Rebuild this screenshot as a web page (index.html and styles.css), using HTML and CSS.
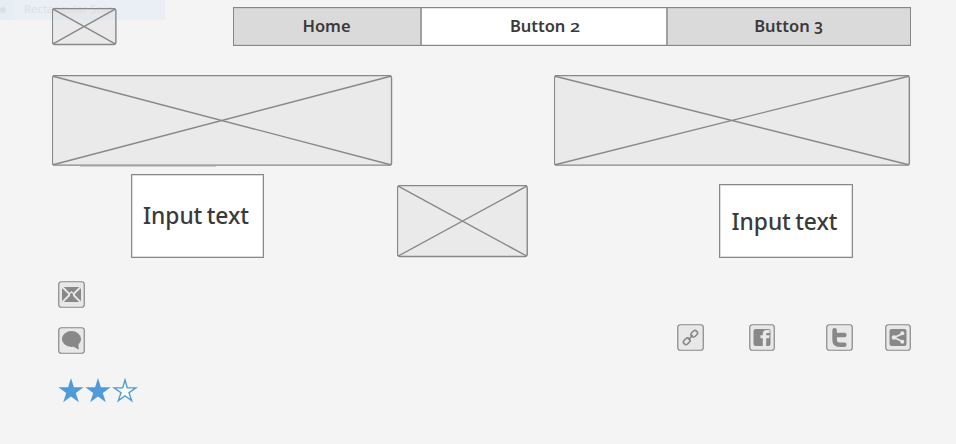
FILE: index.html
```
<!DOCTYPE html>
<html lang="en">
<head>
<meta charset="utf-8">
<title>Wireframe</title>
<link rel="stylesheet" href="styles.css">
</head>
<body>
<div class="snip"><span class="dot"></span><span class="snip-label">Rectangular Snip</span></div>
<header class="header">
  <svg class="placeholder logo" viewBox="0.4 0.3 65 38"><rect x=".75" y=".75" width="63.5" height="36.1" rx="2.5"/><path d="M1.5 1.5 63.5 36.2M63.5 1.5 1.5 36.2"/></svg>
  <nav class="nav">
    <a class="tab home"><span>Home</span></a>
    <a class="tab active"><span>Button <span class="two">2</span></span></a>
    <a class="tab last"><span>Button <span class="three">3</span></span></a>
  </nav>
</header>
<section class="banners">
  <div class="banner-left"><svg class="placeholder" width="341" height="92" viewBox="0.4 0.3 341 92"><rect x=".75" y=".75" width="339.2" height="89.7" rx="2.5"/><path d="M1.5 1.5 339 90M339 1.5 1.5 90"/></svg></div>
  <svg class="placeholder" width="357" height="92" viewBox="0.4 0.3 357 92"><rect x=".75" y=".75" width="355" height="89.7" rx="2.5"/><path d="M1.5 1.5 355 90M355 1.5 1.5 90"/></svg>
</section>
<section class="content">
  <div class="field field-left"><span>Input text</span></div>
  <svg class="placeholder middle" viewBox="0.3 0.3 132 73"><rect x=".75" y=".75" width="129.8" height="71" rx="2.5"/><path d="M1.5 1.5 130 71.3M130 1.5 1.5 71.3"/></svg>
  <div class="field field-right"><span>Input text</span></div>
</section>
<footer class="footer">
  <div class="contact">
    <svg class="icon" viewBox="0 0 27 27"><rect class="frame" x=".75" y=".75" width="25.5" height="25.5" rx="2.5"/><path class="solid" d="M4 6H23V21H4z"/><path class="cut" d="M4.3 6 11.5 13M22.7 6 15.5 13M4.5 21 11.5 14M22.5 21 15.5 14"/><path class="cut" d="M10.5 14.2 13.5 11.2 16.5 14.2"/><path class="solid" d="M12.4 12.2h2.2v2.5h-2.2z"/></svg>
    <svg class="icon" viewBox="0 0 27 27"><rect class="frame" x=".75" y=".75" width="25.5" height="25.5" rx="2.5"/><ellipse class="solid" cx="13.5" cy="12" rx="9.6" ry="7.9"/><path class="solid" d="M14.5 19 20.7 22.8 20.5 17z"/></svg>
    <div class="stars">
      <svg viewBox="0 0 26 25"><path d="M13 0 15.9 9.2H25.6L17.8 15 20.8 24.3 13 18.6 5.2 24.3 8.2 15 .4 9.2H10.1z"/></svg>
      <svg viewBox="0 0 26 25"><path d="M13 0 15.9 9.2H25.6L17.8 15 20.8 24.3 13 18.6 5.2 24.3 8.2 15 .4 9.2H10.1z"/></svg>
      <svg class="empty" viewBox="0 0 26 25"><path d="M13 2 15.3 9.9H23.8L17 14.8 19.6 22.6 13 17.8 6.4 22.6 9 14.8 2.2 9.9H10.7z"/></svg>
    </div>
  </div>
  <div class="social">
    <svg class="icon link" viewBox="0 0 27 27"><rect class="frame" x=".75" y=".75" width="25.5" height="25.5" rx="2.5"/><g class="chain" transform="rotate(-45 13.5 13.5)"><rect x="4.6" y="11" width="7.2" height="5" rx="2.5"/><rect x="15.2" y="11" width="7.2" height="5" rx="2.5"/><path d="M10.3 13.5H16.7"/></g></svg>
    <svg class="icon facebook" viewBox="0 0 26 27"><rect class="frame" x=".75" y=".75" width="24.5" height="25.5" rx="2.5"/><rect class="solid" x="4.5" y="5" width="17" height="17" rx="2"/><path class="light" d="M13.8 22V14.2H11.5V11.3H13.8V9.7C13.8 7.2 15.5 6.1 17.5 6.1H20.6V9H18.6C17.6 9 17.2 9.4 17.2 10.2V11.3H20.6L20.2 14.2H17.2V22z"/></svg>
    <svg class="icon twitter" viewBox="0 0 27 27"><rect class="frame" x=".75" y=".75" width="25.5" height="25.5" rx="2.5"/><path class="bird" d="M8.6 6.2V15.5Q8.6 20.8 13.5 20.8H18.3M8.6 11H18.3"/></svg>
    <svg class="icon" viewBox="0 0 26 27"><rect class="frame" x=".75" y=".75" width="24.5" height="25.5" rx="2.5"/><rect class="solid" x="4.5" y="5" width="17" height="17" rx="2"/><path class="cut" d="M18 9.5 9 13.5 18 17.7"/><circle class="light" cx="9" cy="13.5" r="2.3"/><circle class="light" cx="17.3" cy="9.3" r="2"/><circle class="light" cx="17.3" cy="17.7" r="2"/></svg>
  </div>
</footer>
</body>
</html>
```
FILE: styles.css
```
* { box-sizing: border-box; }
body {
  margin: 0;
  height: 444px;
  padding: 7px 45px 0 52px;
  background: #f4f4f4;
  color: #3a3a3a;
  font-family: "Noto Sans", sans-serif;
  overflow: hidden;
}
svg { display: block; flex: none; }
.snip {
  position: absolute;
  left: 0;
  top: 0;
  width: 165px;
  height: 20px;
  display: flex;
  align-items: center;
  background: linear-gradient(90deg, #e6eef5 14px, #eaeff5 14px);
  color: #dbdddf;
  line-height: 18px;
}
.dot { width: 6px; height: 6px; border-radius: 50%; background: #dddfe1; }
.snip-label { margin: -2px 0 0 18px; font-family: "Open Sans", sans-serif; font-size: 11.4px; white-space: nowrap; }
.placeholder { position: relative; fill: #eaeaea; stroke: #888; stroke-width: 1.4; }
.logo { width: 65px; height: 38px; margin-top: 1px; fill: rgba(220, 220, 220, .4); }
.header { display: flex; justify-content: space-between; height: 39px; }
.nav { display: flex; width: 678px; border: 1px solid #888; background: #dadada; }
.tab { display: flex; align-items: center; justify-content: center; font-size: 16.5px; font-weight: 600; line-height: 20px; box-shadow: inset 0 1px #ccc, inset 0 -1px #ccc; }
.tab > span { position: relative; left: -.5px; top: -.5px; }
.home { width: 187px; border-right: 1px solid #a0a0a0; }
.active { width: 246px; background: #fff; border: solid #a0a0a0; border-width: 0 1px; box-shadow: inset 0 1px #e4e4e4, inset 0 -1px #e4e4e4; }
.last { width: 243px; border-left: 1px solid #a0a0a0; }
.two { font-size: 13px; line-height: 10px; display: inline-block; transform: scaleX(1.35); transform-origin: left; }
.three { position: relative; top: 2px; font-size: 15.5px; line-height: 10px; }
.banners { display: flex; justify-content: space-between; margin: 29px 0 0; height: 92px; }
.banner-left { background: linear-gradient(#ccc, #ccc) 28px 91px / 136px 1px no-repeat; }
.content { display: flex; height: 84px; margin-top: 7px; padding-left: 79px; align-items: flex-end; }
.field { display: flex; align-items: center; justify-content: center; border: 1px solid #888; box-shadow: inset 0 0 0 1px #ddd; background: #fff; font-size: 22.8px; font-weight: 500; line-height: 28px; letter-spacing: -.05px; word-spacing: -1.5px; white-space: nowrap; }
.field span { position: relative; left: -1.5px; }
.field-left { width: 133px; height: 84px; }
.middle { width: 132px; height: 73px; margin: 0 190px 0 133px; }
.field-right { width: 134px; height: 74px; }
.field-right span { top: 1px; }
.footer { display: flex; justify-content: space-between; padding-left: 6px; margin-top: 23px; }
.contact { display: flex; flex-direction: column; gap: 19px; }
.icon { height: 27px; width: 27px; }
.frame { fill: #e8e8e8; stroke: #888; stroke-width: 1.2; }
.solid { fill: #888; }
.light { fill: #e8e8e8; }
.cut { fill: none; stroke: #e8e8e8; stroke-width: 1.8; }
.chain { fill: none; stroke: #888; stroke-width: 1.6; }
.bird { fill: none; stroke: #888; stroke-width: 4.6; stroke-linecap: round; stroke-linejoin: round; }
.stars { display: flex; gap: 1px; margin-top: 5px; }
.stars svg { width: 26px; height: 25px; fill: #4f9bd9; }
.stars .empty { fill: #fff; stroke: #4f9bd9; stroke-width: 1.4; }
.social { display: flex; margin-top: 43px; }
.link { margin-right: 45px; }
.facebook { width: 26px; margin-right: 51px; }
.twitter { margin-right: 32px; }
.twitter + .icon { width: 26px; }
```
